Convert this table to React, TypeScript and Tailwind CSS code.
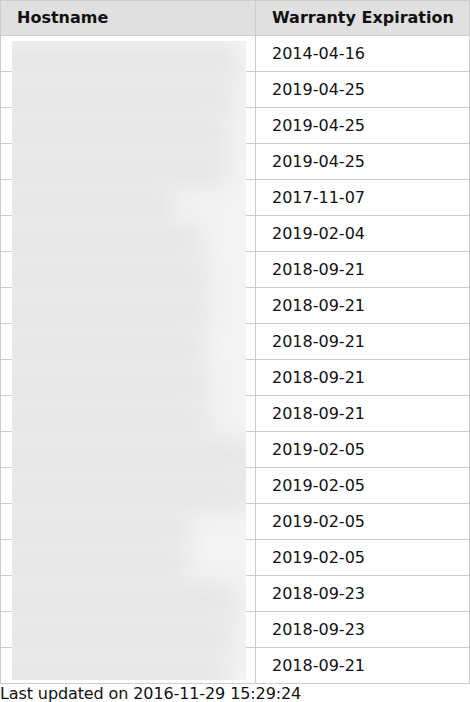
import React from "react";

const dates = [
  "2014-04-16",
  "2019-04-25",
  "2019-04-25",
  "2019-04-25",
  "2017-11-07",
  "2019-02-04",
  "2018-09-21",
  "2018-09-21",
  "2018-09-21",
  "2018-09-21",
  "2018-09-21",
  "2019-02-05",
  "2019-02-05",
  "2019-02-05",
  "2019-02-05",
  "2018-09-23",
  "2018-09-23",
  "2018-09-21",
];

const blurWidths = [225, 220, 215, 215, 160, 190, 195, 195, 190, 195, 195, 240, 240, 175, 175, 225, 220, 215];

export default function App() {
  return (
    <div
      className="w-[470px] bg-white text-[16px] text-[#111]"
      style={{ fontFamily: '"DejaVu Sans", sans-serif' }}
    >
      <div className="relative">
        <table className="w-[470px] table-fixed border-collapse border border-[#cccccc]">
          <colgroup>
            <col className="w-[255px]" />
            <col />
          </colgroup>
          <thead>
            <tr className="bg-[#e0e0e0]">
              <th className="h-[35px] whitespace-nowrap border border-[#cccccc] px-4 text-left font-bold align-middle">
                Hostname
              </th>
              <th className="h-[35px] whitespace-nowrap border border-[#cccccc] px-4 text-left font-bold align-middle">
                Warranty Expiration
              </th>
            </tr>
          </thead>
          <tbody>
            {dates.map((d, i) => (
              <tr key={i}>
                <td className="h-[36px] border border-[#cccccc] px-4"></td>
                <td className="h-[36px] whitespace-nowrap border border-[#cccccc] px-4 align-middle">{d}</td>
              </tr>
            ))}
          </tbody>
        </table>
        <div className="absolute left-[12px] top-[41px] h-[639px] w-[234px] overflow-hidden bg-[#f4f4f4]">
          <div className="flex flex-col pt-[2px]">
            {blurWidths.map((w, i) => (
              <div key={i} className="h-[36px]">
                <div
                  className="h-full bg-[#e5e5e5] blur-[12px]"
                  style={{ width: w + 30, marginLeft: -30 }}
                />
              </div>
            ))}
          </div>
        </div>
      </div>
      <div className="leading-[19px] tracking-[-0.11px]">Last updated on 2016-11-29 15:29:24</div>
    </div>
  );
}
